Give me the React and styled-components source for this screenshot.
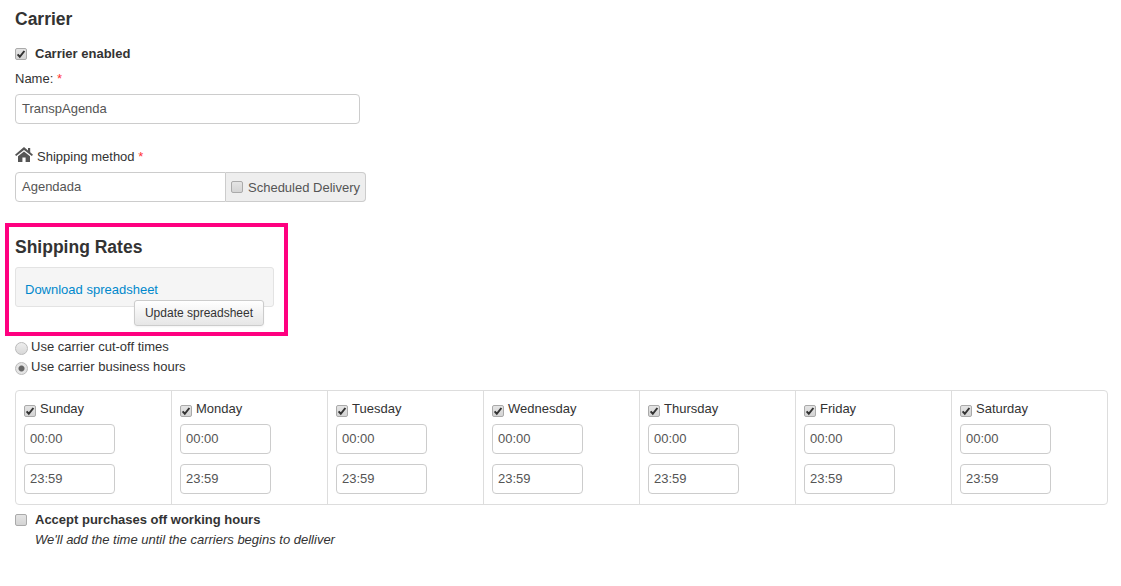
import React from 'react';
import styled, { createGlobalStyle } from 'styled-components';

const days = ['Sunday', 'Monday', 'Tuesday', 'Wednesday', 'Thursday', 'Friday', 'Saturday'];

const GlobalStyle = createGlobalStyle`
  html, body {
    margin: 0;
    background: #fff;
    font-family: "Liberation Sans", Arial, sans-serif;
    font-size: 13px;
    color: #333;
  }
`

const Page = styled.div`
  width: 1121px;
  height: 586px;
  box-sizing: border-box;
  padding: 10px 13px 0 15px;
  overflow: hidden;
`

const Heading = styled.h2`
  margin: 0;
  font-size: 17.5px;
  line-height: 18px;
  font-weight: bold;
  color: #333;
`

const Row = styled.label`
  display: flex;
  align-items: center;
  gap: ${props => props.gap || 8}px;
  height: 18px;
  margin-top: ${props => props.top || 0}px;
  font-weight: ${props => props.bold ? 'bold' : 'normal'};
`

const Box = styled.span`
  flex: none;
  width: 10px;
  height: 10px;
  border: 1px solid #aaa;
  border-radius: 2px;
  background: linear-gradient(#e4e4e4, #d4d4d4);
  display: flex;
  align-items: center;
  justify-content: center;
  margin-top: ${props => props.top || 0}px;
`

const Check = () => (
  <svg width="10" height="10" viewBox="0 0 10 10">
    <path d="M1.6 5.4 L3.8 7.8 L8.4 2" fill="none" stroke="#333" strokeWidth="2" />
  </svg>
)

const Radio = styled.span`
  flex: none;
  width: 11px;
  height: 11px;
  border: 1px solid #bbb;
  border-radius: 50%;
  background: ${props => props.on
    ? 'radial-gradient(circle, #666 0 2.5px, #e4e4e4 3.5px)'
    : 'linear-gradient(#eee, #d8d8d8)'};
  margin-top: 5px;
`

const Label = styled.div`
  display: flex;
  align-items: flex-start;
  gap: 4px;
  height: 16px;
  line-height: 18px;
  margin-top: ${props => props.top || 0}px;
`

const Star = styled.span`
  color: #f33;
`

const TextInput = styled.div`
  box-sizing: border-box;
  width: ${props => props.width}px;
  height: 30px;
  margin-top: ${props => props.top || 0}px;
  padding: 0 ${props => props.pad || 6}px;
  border: 1px solid #ccc;
  border-radius: ${props => props.radius || '4px'};
  background: #fff;
  color: #555;
  line-height: 28px;
`

const Group = styled.div`
  display: flex;
  height: 30px;
  margin-top: 8px;
`

const Addon = styled.div`
  box-sizing: border-box;
  display: flex;
  align-items: center;
  gap: 5px;
  width: 140px;
  padding-left: 5px;
  border: 1px solid #ccc;
  border-left: 0;
  border-radius: 0 4px 4px 0;
  background: #eee;
  color: #555;
`

const RatesSection = styled.section`
  box-sizing: border-box;
  width: 283px;
  height: 113px;
  margin: 21px 0 0 -10px;
  padding: 11px 10px 0 6px;
  border: 4px solid #ff0080;
`

const Well = styled.div`
  position: relative;
  box-sizing: border-box;
  height: 40px;
  margin-top: 11px;
  padding: 13px 9px 0;
  border: 1px solid #e3e3e3;
  border-radius: 3px;
  background: #f5f5f5;
`

const Link = styled.a`
  display: block;
  color: #0088cc;
  line-height: 18px;
`

const UpdateButton = styled.button`
  position: absolute;
  left: 118px;
  top: 32px;
  width: 130px;
  height: 26px;
  padding: 0;
  border: 1px solid #ccc;
  border-radius: 3px;
  background: linear-gradient(#fff, #e6e6e6);
  box-shadow: 0 1px 2px rgba(0, 0, 0, 0.05);
  color: #333;
  font: 12px "Liberation Sans", Arial, sans-serif;
`

const Options = styled.div`
  margin-top: 1px;
`

const Schedule = styled.div`
  display: grid;
  grid-template-columns: 155px repeat(6, 156px);
  box-sizing: border-box;
  width: 1093px;
  height: 115px;
  margin-top: 15px;
  border: 1px solid #ddd;
  border-radius: 4px;
`

const Day = styled.div`
  padding: 9px 0 0 8px;
  border-left: ${props => props.first ? '0' : '1px solid #ddd'};
  display: flex;
  flex-direction: column;
  gap: 10px;
  box-sizing: border-box;
`

const DayHead = styled.label`
  display: flex;
  align-items: flex-start;
  gap: 4px;
  height: 15px;
  line-height: 18px;
  margin-bottom: -1px;
`

const Note = styled.div`
  margin: 3px 0 0 20px;
  font-style: italic;
  line-height: 18px;
`

const HomeIcon = styled.svg`
  flex: none;
  margin-top: -1px;
`

const Home = () => (
  <HomeIcon width="18" height="15" viewBox="0 0 18 15">
    <path fill="#555" d="M9 0 L13 3.4 V1 H15.2 V5.3 L18 7.8 L16.8 9 L9 3 L1.2 9 L0 7.8 Z M3 9.2 L9 4.4 L15 9.2 V15 H10.6 V10.6 H7.4 V15 H3 Z" />
  </HomeIcon>
)

const App = () => (
  <Page>
    <GlobalStyle />
    <Heading>Carrier</Heading>
    <Row bold top={16}><Box top={2}><Check /></Box>Carrier enabled</Row>
    <Label top={8}><span>Name: <Star>*</Star></span></Label>
    <TextInput width={345} top={8}>TranspAgenda</TextInput>
    <Label top={24}><Home /><span>Shipping method <Star>*</Star></span></Label>
    <Group>
      <TextInput width={211} radius="4px 0 0 4px">Agendada</TextInput>
      <Addon><Box /><span>Scheduled Delivery</span></Addon>
    </Group>
    <RatesSection>
      <Heading>Shipping Rates</Heading>
      <Well>
        <Link>Download spreadsheet</Link>
        <UpdateButton>Update spreadsheet</UpdateButton>
      </Well>
    </RatesSection>
    <Options>
      <Row gap={3}><Radio />Use carrier cut-off times</Row>
      <Row gap={3} top={2}><Radio on />Use carrier business hours</Row>
    </Options>
    <Schedule>
      {days.map((day, i) => (
        <Day key={day} first={i === 0}>
          <DayHead><Box top={5}><Check /></Box>{day}</DayHead>
          <TextInput width={91} pad={5}>00:00</TextInput>
          <TextInput width={91} pad={5}>23:59</TextInput>
        </Day>
      ))}
    </Schedule>
    <Row bold top={5}><Box top={2} />Accept purchases off working hours</Row>
    <Note>We'll add the time until the carriers begins to delliver</Note>
  </Page>
)

export default App
